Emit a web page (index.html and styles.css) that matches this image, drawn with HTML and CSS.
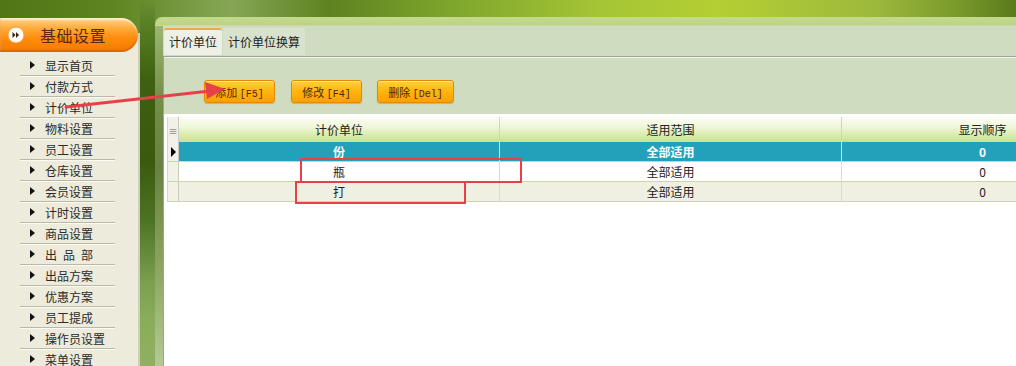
FILE: index.html
```html
<!DOCTYPE html>
<html lang="zh-CN">
<head>
    <meta charset="UTF-8">
    <title>基础设置 - 计价单位</title>
    <link rel="stylesheet" href="styles.css">
</head>
<body>

    <div class="screen">
        <aside class="sidebar">
            <div class="side-head">
                <span class="head-icon">
                    <svg width="18" height="18" viewBox="0 0 18 18">
                        <circle cx="9" cy="9" r="8" fill="#fffaf2" stroke="#f3a040" stroke-width="1"/>
                        <polygon points="5.5,6 8.5,9 5.5,12" fill="#3a2410"/>
                        <polygon points="9,6 12,9 9,12" fill="#3a2410"/>
                    </svg>
                </span>
                <span class="head-title">基础设置</span>
            </div>
            <ul class="side-list">
                <li><i class="tri"></i>显示首页</li>
                <li><i class="tri"></i>付款方式</li>
                <li><i class="tri"></i>计价单位</li>
                <li><i class="tri"></i>物料设置</li>
                <li><i class="tri"></i>员工设置</li>
                <li><i class="tri"></i>仓库设置</li>
                <li><i class="tri"></i>会员设置</li>
                <li><i class="tri"></i>计时设置</li>
                <li><i class="tri"></i>商品设置</li>
                <li><i class="tri"></i><span class="spaced">出品部</span></li>
                <li><i class="tri"></i>出品方案</li>
                <li><i class="tri"></i>优惠方案</li>
                <li><i class="tri"></i>员工提成</li>
                <li><i class="tri"></i>操作员设置</li>
                <li><i class="tri"></i>菜单设置</li>
            </ul>
        </aside>

        <div class="gap"></div>

        <section class="main">
            <div class="panel">
                <div class="tabs">
                    <span class="tab active">计价单位</span>
                    <span class="tab">计价单位换算</span>
                </div>
                <div class="content">
                    <div class="toolbar">
                        <button class="btn btn-add">添加 <span class="key">[F5]</span></button>
                        <button class="btn btn-edit">修改 <span class="key">[F4]</span></button>
                        <button class="btn btn-del">删除 <span class="key">[Del]</span></button>
                    </div>
                    <div class="grid-wrap">
                        <table class="grid">
                            <colgroup>
                                <col class="c-ind">
                                <col class="c-unit">
                                <col class="c-scope">
                                <col class="c-order">
                            </colgroup>
                            <thead>
                                <tr>
                                    <th class="ind"><span class="ind-mark">≡</span></th>
                                    <th>计价单位</th>
                                    <th>适用范围</th>
                                    <th>显示顺序</th>
                                </tr>
                            </thead>
                            <tbody>
                                <tr class="selected">
                                    <td class="ind"><i class="row-tri"></i></td>
                                    <td>份</td>
                                    <td>全部适用</td>
                                    <td>0</td>
                                </tr>
                                <tr>
                                    <td class="ind"></td>
                                    <td>瓶</td>
                                    <td>全部适用</td>
                                    <td>0</td>
                                </tr>
                                <tr class="alt">
                                    <td class="ind"></td>
                                    <td>打</td>
                                    <td>全部适用</td>
                                    <td>0</td>
                                </tr>
                            </tbody>
                        </table>
                    </div>
                </div>
            </div>
        </section>

        <!-- 标注 -->
        <svg class="arrow" width="240" height="120" viewBox="0 0 240 120">
            <line x1="66" y1="107" x2="210" y2="91" stroke="#e8404a" stroke-width="3" stroke-linecap="round"/>
            <polygon points="225,89 205,82 207,99" fill="#e8404a"/>
        </svg>
        <div class="mark mark-one"></div>
        <div class="mark mark-two"></div>
    </div>

</body>
</html>
```

FILE: styles.css
```css
body {
    margin: 0;
    padding: 0;
    overflow: hidden;
    font-family: "Noto Sans CJK SC", "Noto Sans", sans-serif;
    font-size: 12px;
    color: #222;
}

.screen {
    position: relative;
    width: 1016px;
    height: 366px;
    overflow: hidden;
    display: flex;
    background: linear-gradient(90deg, #4f7515 0px, #5d8420 110px, #86a656 230px, #5e8220 330px, #7ea52c 450px, #a5c535 600px, #b4cf33 720px, #9bb83c 880px, #78982a 960px, #5a7a1c 1016px);
}

/* 左侧菜单 */
.sidebar {
    width: 138px;
    flex-shrink: 0;
    border-right: 2px solid #cfd0b6;
    background: linear-gradient(to bottom, transparent 0, transparent 34px, #ecebdc 34px);
    border-image: linear-gradient(to bottom, transparent 0, transparent 34px, #cfd0b6 34px) 1;
    padding-top: 18px;
}

.side-head {
    height: 34px;
    display: flex;
    align-items: center;
    border-radius: 0 17px 17px 0;
    background: linear-gradient(to bottom, #ffd590 0%, #ffab3a 30%, #ff8c0c 60%, #f47a00 100%);
    box-shadow: inset 0 -2px 2px rgba(200, 80, 0, 0.5), inset 0 2px 2px rgba(255, 255, 255, 0.6);
}

.head-icon {
    width: 18px;
    height: 18px;
    margin-left: 7px;
    display: flex;
}

.head-title {
    margin-left: 15px;
    font-size: 16px;
    color: #5a2a08;
    letter-spacing: 0.5px;
}

.side-list {
    list-style: none;
    margin: 3px 0 0 0;
    padding: 0;
}

.side-list li {
    height: 20px;
    margin: 0 23px 0 20px;
    padding-left: 10px;
    display: flex;
    align-items: center;
    border-bottom: 1px solid #b9b9aa;
    box-shadow: 0 1px 0 #fbfbf4;
    font-size: 12px;
    color: #2a2a2a;
    white-space: nowrap;
}

.spaced {
    letter-spacing: 6px;
}

.tri {
    width: 0;
    height: 0;
    border-top: 4px solid transparent;
    border-bottom: 4px solid transparent;
    border-left: 5px solid #111;
    margin-right: 10px;
}

/* 中间的绿色条 */
.gap {
    width: 15px;
    flex-shrink: 0;
    background: linear-gradient(to bottom, rgba(90, 130, 30, 0) 0, #5a8226 20px, #3e6010 80px, #3a5a0e 160px, #4e7224 220px, #7a9e4e 280px, #8aad5c 320px, #8fb060 366px);
}

/* 主面板 */
.main {
    flex: 1;
    margin-top: 17px;
    padding: 9px 0 0 8px;
    border-radius: 7px 0 0 0;
    background:
        linear-gradient(to bottom, #c3d98d 0, #bdd384 8px, #d9ddd0 9px, transparent 9px),
        linear-gradient(to bottom, #a2ba78 0, #748f4a 80px, #66823e 150px, #86a25c 240px, #b3ca94 349px);
    overflow: hidden;
}

.panel {
    height: 100%;
    padding-top: 2px;
    background: #d0dcbf;
}

.tabs {
    height: 27px;
    padding-left: 1px;
    display: flex;
    gap: 1px;
}

.tab {
    padding: 0 5px 0 5px;
    display: flex;
    align-items: center;
    font-size: 12px;
    color: #222;
    background: #d9e2cd;
    border-radius: 3px 3px 0 0;
}

.tab.active {
    background: #eef0e6;
    border-top: 2px solid #f4a640;
    padding-bottom: 2px;
}

.content {
    margin-top: 1px;
    border: 1px solid #9ea39a;
    border-right: none;
    height: 100%;
    background: #fff;
}

.toolbar {
    height: 34px;
    padding: 22px 0 0 40px;
    border-top: 1px solid #f3f5ec;
    background: #d0dcbf;
    display: flex;
}

.btn {
    height: 23px;
    padding: 0;
    border: 1px solid #e58a00;
    border-radius: 3px;
    background: linear-gradient(to bottom, #ffd040 0%, #ffb612 45%, #fba000 100%);
    box-shadow: inset 0 1px 0 rgba(255, 255, 255, 0.5), 0 1px 1px rgba(150, 110, 30, 0.35);
    font-family: "Noto Sans CJK SC", sans-serif;
    font-size: 11px;
    color: #4e2600;
    cursor: pointer;
}

.key {
    font-family: "Liberation Mono", monospace;
    font-size: 10px;
}

.btn-add {
    width: 71px;
}

.btn-edit {
    width: 71px;
    margin-left: 16px;
}

.btn-del {
    width: 77px;
    margin-left: 15px;
}

/* 表格 */
.grid-wrap {
    padding: 2px 0 0 3px;
    border-top: 1px solid #ffffff;
    overflow: hidden;
}

.grid {
    border-collapse: collapse;
    table-layout: fixed;
    width: 956px;
}

.c-ind { width: 11px; }
.c-unit { width: 321px; }
.c-scope { width: 342px; }
.c-order { width: 282px; }

.grid th {
    height: 25px;
    padding: 0;
    font-weight: normal;
    font-size: 12px;
    color: #222;
    text-align: center;
    background: linear-gradient(to bottom, #fbfdf5 0%, #eef6d8 40%, #c9e28a 100%);
    border-right: 1px solid #cfd6bd;
}

.grid td {
    height: 19px;
    padding: 0;
    font-size: 12px;
    text-align: center;
    border-bottom: 1px solid #c9d8a6;
    border-right: 1px solid #d8dfc2;
}

.grid .ind {
    background: #f1f1e8;
    border-right: 1px solid #c9cbbd;
    border-left: 1px solid #d6d6cc;
}

.grid th.ind {
    background: #f1f1e8;
}

.ind-mark {
    font-size: 9px;
    color: #555;
}

.row-tri {
    display: block;
    width: 0;
    height: 0;
    margin-left: 3px;
    border-top: 5px solid transparent;
    border-bottom: 5px solid transparent;
    border-left: 5px solid #000;
}

.grid tr.selected td {
    background: #23a1bb;
    color: #fff;
    font-weight: bold;
}

.grid tr.selected td.ind {
    background: #f1f1e8;
}

.grid tr.alt td {
    background: #f0f0e2;
}

.grid tr.alt td.ind {
    background: #f1f1e8;
}

/* 红色标注 */
.arrow {
    position: absolute;
    left: 0;
    top: 0;
}

.mark {
    position: absolute;
    border: 2px solid #e8404a;
    box-sizing: border-box;
}

.mark-one {
    left: 300px;
    top: 158px;
    width: 222px;
    height: 25px;
}

.mark-two {
    left: 295px;
    top: 181px;
    width: 171px;
    height: 23px;
}
```
